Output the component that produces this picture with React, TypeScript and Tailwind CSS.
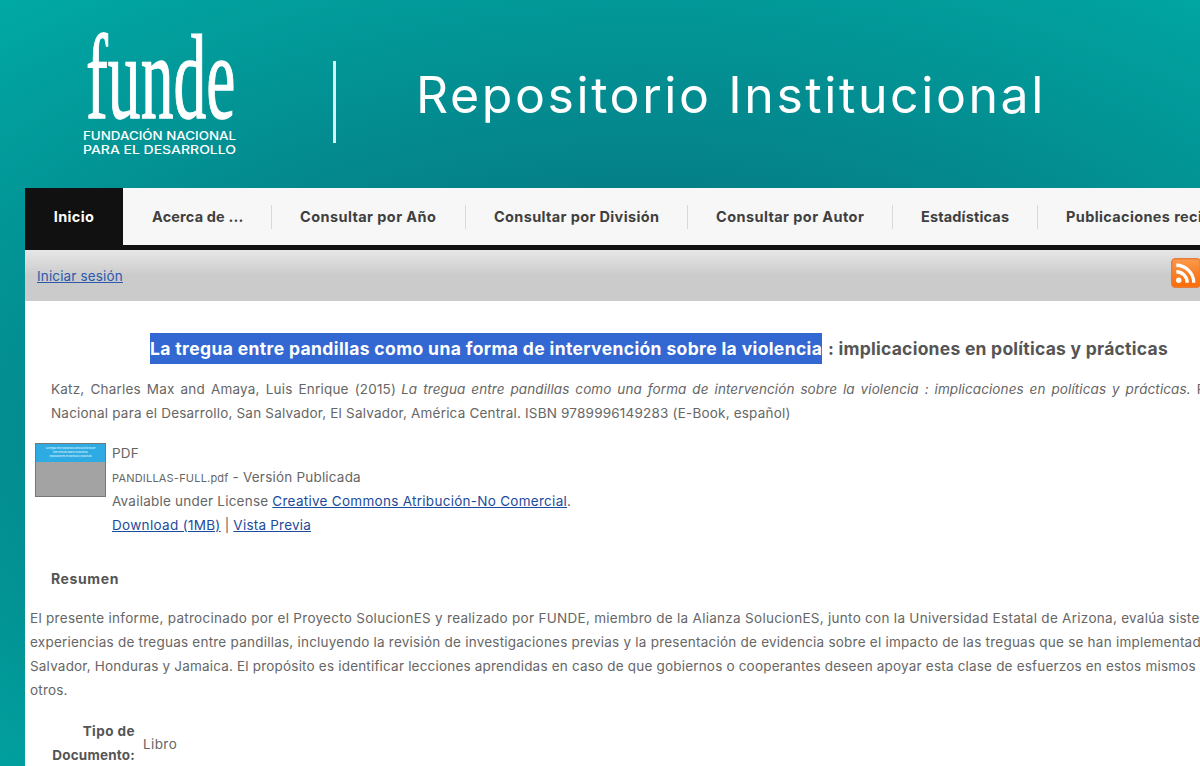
import clsx from 'clsx'

type NavItem = { label: string; width: string; spacing: string }

const NAV: NavItem[] = [
  { label: 'Acerca de ...', width: 'w-[149px] pl-[29px]', spacing: 'tracking-[0.15px]' },
  { label: 'Consultar por Año', width: 'w-[194px] pl-7', spacing: 'tracking-[0.42px]' },
  { label: 'Consultar por División', width: 'w-[222px] pl-7', spacing: 'tracking-[0.36px]' },
  { label: 'Consultar por Autor', width: 'w-[205px] pl-7', spacing: 'tracking-[0.42px]' },
  { label: 'Estadísticas', width: 'w-[145px] pl-7', spacing: 'tracking-[0.15px]' },
  { label: 'Publicaciones recientes', width: 'w-[240px] pl-7', spacing: 'tracking-[0.36px]' },
]

const ABSTRACT = [
  { text: 'El presente informe, patrocinado por el Proyecto SolucionES y realizado por FUNDE, miembro de la Alianza SolucionES, junto con la Universidad Estatal de Arizona, evalúa sistemáticamente', spacing: 'tracking-[0.285px]' },
  { text: 'experiencias de treguas entre pandillas, incluyendo la revisión de investigaciones previas y la presentación de evidencia sobre el impacto de las treguas que se han implementado', spacing: 'tracking-[0.23px]' },
  { text: 'Salvador, Honduras y Jamaica. El propósito es identificar lecciones aprendidas en caso de que gobiernos o cooperantes deseen apoyar esta clase de esfuerzos en estos mismos', spacing: 'tracking-[0.19px]' },
  { text: 'otros.', spacing: 'tracking-[0.2px]' },
]

const link = 'text-[#1c4b9c] underline underline-offset-1'

function Logo() {
  return (
    <svg className="mt-[26px] ml-[80px] h-[134px] w-[160px] shrink-0" viewBox="80 26 160 134" fill="#fff" aria-label="funde">
      <text
        transform="translate(86 118) scale(0.542 1)"
        className="font-['Liberation_Serif','Times_New_Roman',serif] text-[121px]"
        stroke="#fff"
        strokeWidth="1.3"
        vectorEffect="non-scaling-stroke"
        textRendering="geometricPrecision"
      >
        funde
      </text>
      <g fontFamily="Inter, sans-serif" fontSize="11.4" fontWeight="500">
        <text x="83" y="139.6" textLength="153" lengthAdjust="spacingAndGlyphs">FUNDACIÓN NACIONAL</text>
        <text x="83" y="154.2" textLength="153" lengthAdjust="spacingAndGlyphs">PARA EL DESARROLLO</text>
      </g>
    </svg>
  )
}

function RssIcon() {
  return (
    <svg className="-mr-px mb-[6px] ml-auto size-[30px] shrink-0" viewBox="0 0 31 31" fill="none">
      <defs>
        <linearGradient id="rss" x1="0" y1="0" x2="0" y2="1">
          <stop offset="0" stopColor="#fb9b4c" />
          <stop offset="0.5" stopColor="#f98028" />
          <stop offset="1" stopColor="#fb6d03" />
        </linearGradient>
      </defs>
      <rect x="0.75" y="0.75" width="29.5" height="29.5" rx="4" fill="url(#rss)" stroke="#ea7a3a" strokeWidth="1.5" />
      <circle cx="8" cy="23" r="2.8" fill="#fff" />
      <path d="M5.5 14.2a11.3 11.3 0 0 1 11.3 11.3M5.5 7.5a18 18 0 0 1 18 18" stroke="#fff" strokeWidth="3.4" />
    </svg>
  )
}

function Header() {
  return (
    <header className="flex h-[188px] items-start">
      <Logo />
      <div className="mt-[61px] ml-[93px] h-[82px] w-[3px] shrink-0 bg-[#d5f3f2]" />
      <h1 className="mt-[65px] ml-[80px] text-[50px] leading-[60px] font-normal tracking-[2.58px] whitespace-nowrap text-white">
        Repositorio Institucional
      </h1>
    </header>
  )
}

function Nav() {
  return (
    <nav className="flex h-[62px] border-b-[5px] border-[#111] bg-[#f7f7f7] text-[14.5px] font-bold text-[#3f3f3f]">
      <a className="z-10 -mb-[5px] flex w-[98px] shrink-0 items-center justify-center bg-[#111] pb-[5px] tracking-[0.35px] text-white">Inicio</a>
      {NAV.map((item, i) => (
        <a
          key={item.label}
          className={clsx(
            'mt-[17px] flex h-6 shrink-0 items-center pb-px whitespace-nowrap',
            item.width,
            item.spacing,
            i < NAV.length - 1 && 'border-r border-[#d9d9d9]',
          )}
        >
          {item.label}
        </a>
      ))}
    </nav>
  )
}

function Toolbar() {
  return (
    <div className="flex h-[51px] items-center bg-linear-to-b from-[#e7e7e7] to-[#cbcbcb] to-50% pl-3">
      <a className="tracking-[0.15px] text-[#2a59ae] underline underline-offset-1">Iniciar sesión</a>
      <RssIcon />
    </div>
  )
}

export default function App() {
  return (
    <div className="h-[766px] w-[1200px] overflow-hidden bg-[radial-gradient(ellipse_1000px_560px_at_640px_430px,#086072_0%,#00a9a4_100%)] font-['Inter',sans-serif]">
      <Header />
      <main className="ml-[25px] h-[578px] w-[1175px] overflow-hidden bg-white text-[13.5px] leading-6 whitespace-nowrap text-[#666]">
        <Nav />
        <Toolbar />

        <h2 className="mt-8 ml-[125px] flex text-[17.5px] leading-[31px] font-bold text-[#555]">
          <span className="w-[672px] bg-[#3367d1] tracking-[0.375px] text-white">La tregua entre pandillas como una forma de intervención sobre la violencia</span>
          <span className="ml-[6px] tracking-[0.25px]">: implicaciones en políticas y prácticas</span>
        </h2>

        <div className="mt-[13px] ml-[26px]">
          <p className="flex">
            <span className="tracking-[0.2px] [word-spacing:2px]">Katz, Charles Max and Amaya, Luis Enrique (2015)</span>
            <em className="ml-[5px] tracking-[0.1px] [word-spacing:2px]">
              La tregua entre pandillas como una forma de intervención sobre la violencia : implicaciones en políticas y prácticas.
            </em>
            <span className="ml-[6px]">Fundación</span>
          </p>
          <p className="tracking-[0.2px]">Nacional para el Desarrollo, San Salvador, El Salvador, América Central. ISBN 9789996149283 (E-Book, español)</p>
        </div>

        <section className="mt-4 ml-[10px] flex">
          <div className="mt-[2px] h-[54px] w-[71px] shrink-0 border border-[#777] bg-[#a3a3a3]">
            <div className="flex h-[18px] flex-col items-center justify-center bg-[#2dabe2] text-[2.3px] leading-[4px] font-bold text-[#c7eafa]">
              <span>La tregua entre pandillas como una forma de</span>
              <span>intervención sobre la violencia:</span>
              <span>implicaciones en políticas y prácticas</span>
            </div>
          </div>
          <div className="ml-[6px] tracking-[0.22px]">
            <p>PDF</p>
            <p className="h-6 tracking-[0.2px]"><span className="text-[11px]">PANDILLAS-FULL.pdf</span> - Versión Publicada</p>
            <p>Available under License <a className={clsx(link, 'tracking-[0.28px]')}>Creative Commons Atribución-No Comercial</a>.</p>
            <p><a className={clsx(link, 'tracking-[0.32px]')}>Download (1MB)</a> | <a className={link}>Vista Previa</a></p>
          </div>
        </section>

        <h3 className="mt-[30px] ml-[26px] text-sm leading-6 font-bold tracking-[0.6px] text-[#555]">Resumen</h3>
        <div className="mt-[15px] ml-[5px]">
          {ABSTRACT.map(line => <p key={line.text} className={line.spacing}>{line.text}</p>)}
        </div>

        <div className="mt-[17px] flex items-center">
          <div className="w-[110px] text-right font-bold text-[#555]">
            <p className="tracking-[0.45px]">Tipo de</p>
            <p className="tracking-[0.2px]">Documento:</p>
          </div>
          <span className="ml-2 pt-[2px] tracking-[0.4px]">Libro</span>
        </div>
      </main>
    </div>
  )
}
